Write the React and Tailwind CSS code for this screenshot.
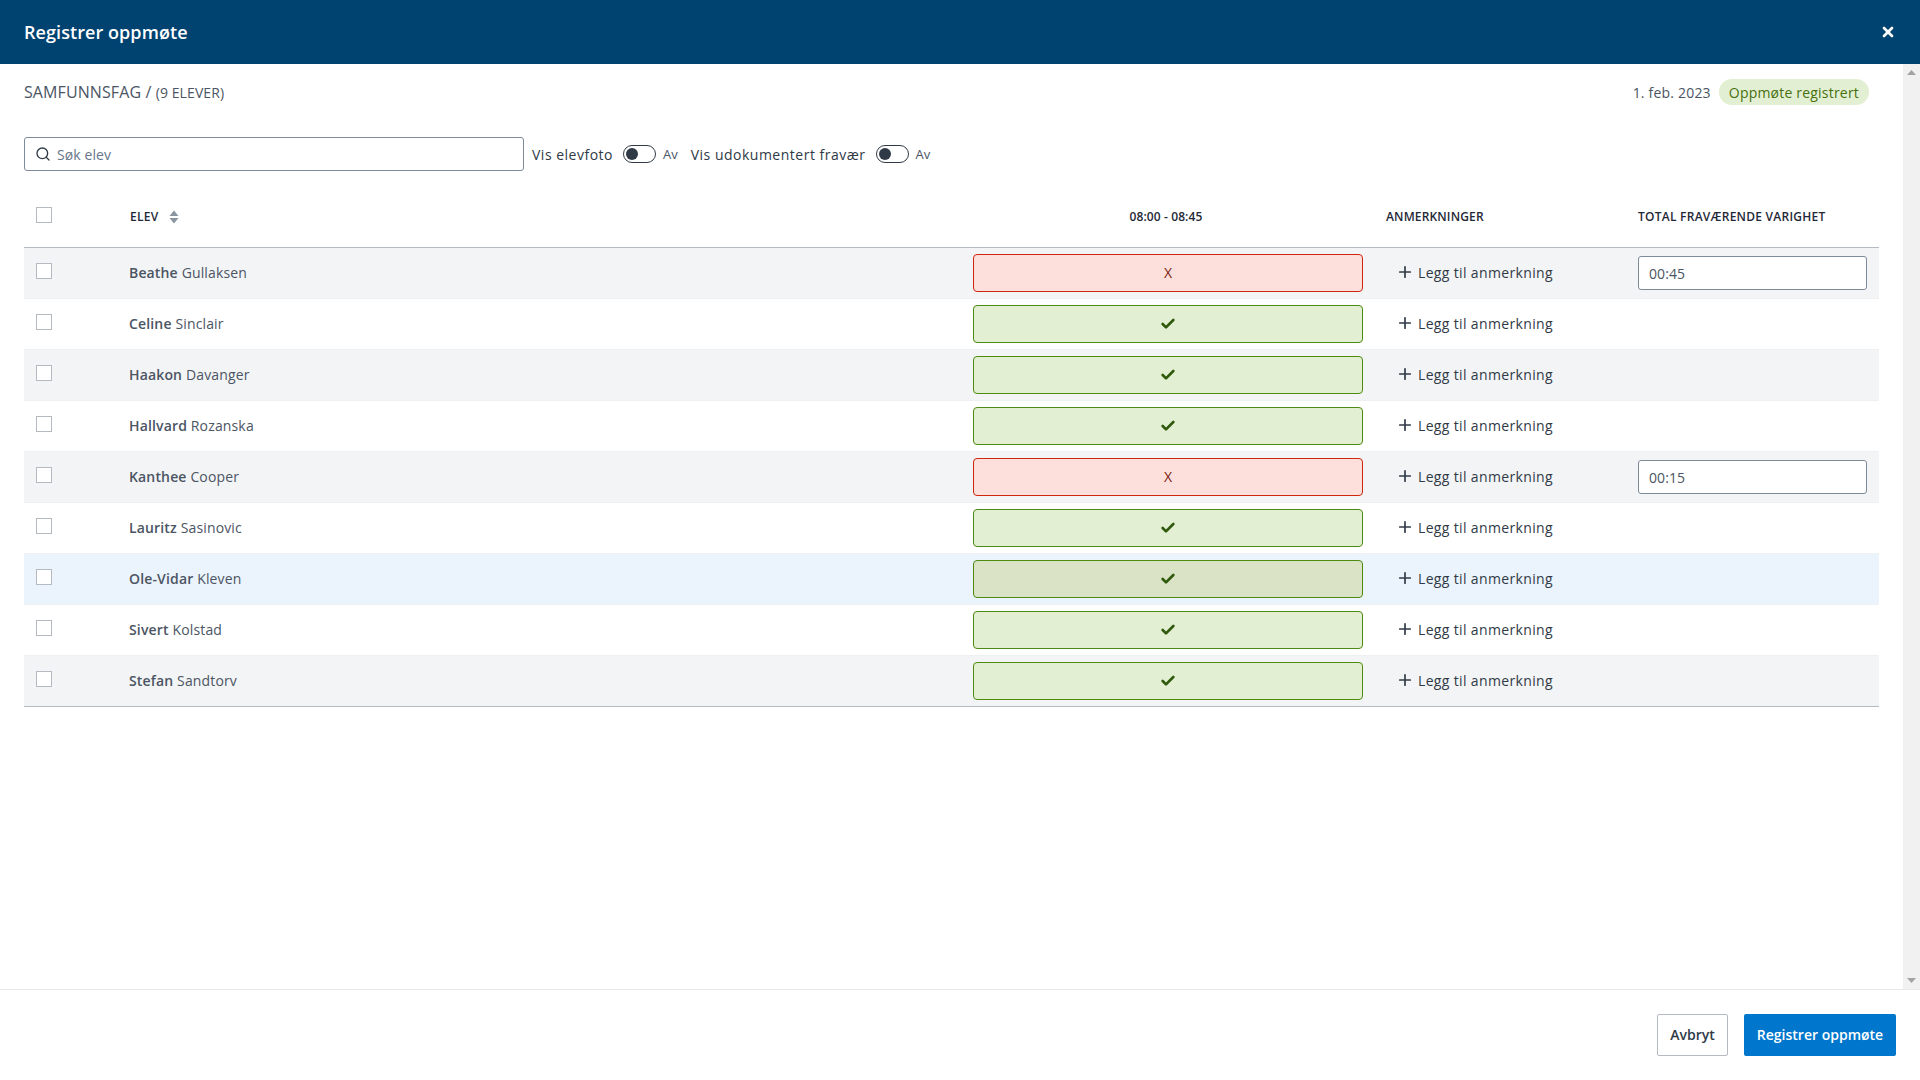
import React from 'react';
import { Search, Plus, Check, X } from 'lucide-react';

const students = [
  { first: 'Beathe', last: 'Gullaksen', absent: '00:45', bg: 'bg-[#f3f4f6]' },
  { first: 'Celine', last: 'Sinclair', bg: 'bg-white' },
  { first: 'Haakon', last: 'Davanger', bg: 'bg-[#f3f4f6]' },
  { first: 'Hallvard', last: 'Rozanska', bg: 'bg-white' },
  { first: 'Kanthee', last: 'Cooper', absent: '00:15', bg: 'bg-[#f3f4f6]' },
  { first: 'Lauritz', last: 'Sasinovic', bg: 'bg-white' },
  { first: 'Ole-Vidar', last: 'Kleven', bg: 'bg-[#ebf3fc]', hover: true },
  { first: 'Sivert', last: 'Kolstad', bg: 'bg-white' },
  { first: 'Stefan', last: 'Sandtorv', bg: 'bg-[#f3f4f6]' },
];

const gridCols = 'grid grid-cols-[105px_844px_413px_252px_241px] items-center';

const Checkbox = ({ className = '' }) => (
  <div className={`ml-[12px] w-[16px] h-[16px] border border-[#b5bac1] bg-white ${className}`} />
);

const Toggle = ({ label }) => (
  <div className="flex items-center">
    <span className="text-[14px] tracking-[0.5px] font-medium text-[#303a46]">{label}</span>
    <div className="ml-[10px] w-[33px] h-[18px] rounded-full border border-[#303a46] bg-white flex items-center pl-[2px]">
      <div className="w-[12px] h-[12px] rounded-full bg-[#303a46]" />
    </div>
    <span className="ml-[7px] mt-[1px] text-[13px] text-[#4b5563]">Av</span>
  </div>
);

const StatusCell = ({ student }) => {
  if (student.absent) {
    return (
      <div className="w-[390px] h-[38px] rounded-[4px] border border-[#d0260f] bg-[#fde0dc] pb-[1px] flex items-center justify-center text-[14px] text-[#7a1c12]">
        X
      </div>
    );
  }
  return (
    <div className={`w-[390px] h-[38px] rounded-[4px] border border-[#4f8a10] flex items-center justify-center ${student.hover ? 'bg-[#dae3c6]' : 'bg-[#e3efd3]'}`}>
      <Check size={16} strokeWidth={4} className="text-[#2f5a0c]" />
    </div>
  );
};

export default function App() {
  return (
    <div className="w-[1920px] h-[1080px] flex flex-col bg-white overflow-hidden font-['Open_Sans',sans-serif] text-[#303a46]">
      <header className="h-[64px] shrink-0 bg-[#004370] flex items-center justify-between pl-[24px] pr-[24px]">
        <h1 className="text-[18px] tracking-[0.07px] font-semibold text-white">Registrer oppmøte</h1>
        <X size={16} strokeWidth={4} className="text-white" />
      </header>

      <div className="flex-1 flex min-h-0">
        <main className="flex-1 pl-[24px] pr-[24px]">
          <div className="h-[56px] flex items-center justify-between">
            <div className="text-[16px] tracking-[0.1px] text-[#4b5563] uppercase">
              Samfunnsfag / <span className="text-[14px]">(9 elever)</span>
            </div>
            <div className="flex items-center pr-[10px]">
              <span className="text-[14px] tracking-[0.2px] text-[#4b5563]">1. feb. 2023</span>
              <span className="ml-[8px] h-[26px] px-[10px] rounded-full bg-[#e3efd3] text-[14px] tracking-[0.2px] text-[#47700f] flex items-center">Oppmøte registrert</span>
            </div>
          </div>

          <div className="mt-[17px] flex items-center">
            <div className="w-[500px] h-[34px] rounded-[3px] border border-[#7d8a99] flex items-center pl-[10px]">
              <Search size={16} strokeWidth={2} className="text-[#303a46]" />
              <span className="ml-[6px] text-[14px] tracking-[0.1px] text-[#68778a]">Søk elev</span>
            </div>
            <div className="ml-[8px] flex items-center gap-[13px]">
              <Toggle label="Vis elevfoto" />
              <Toggle label="Vis udokumentert fravær" />
            </div>
          </div>

          <div className="mt-[14px] w-[1855px]">
            <div className={`${gridCols} h-[63px] border-b border-[#b5bac1] text-[12px] tracking-[0.25px] font-semibold uppercase text-[#1f2937]`}>
              <Checkbox className="mb-[3px]" />
              <div className="flex items-center pl-[1px] pt-[2px]">
                ELEV
                <svg width="10" height="14" viewBox="0 0 10 14" className="ml-[11px]">
                  <path d="M5 0.5 L9.5 6 L0.5 6 Z M0.5 8 L9.5 8 L5 13.5 Z" fill="#8b95a1" />
                </svg>
              </div>
              <div className="w-[386px] pt-[2px] text-center tracking-[0.1px]">08:00 - 08:45</div>
              <div className="pt-[2px] tracking-[0.15px]">Anmerkninger</div>
              <div className="pt-[2px]">Total fraværende varighet</div>
            </div>

            <div className="border-b border-[#b5bac1]">
              {students.map((s) => (
                <div key={s.first} className={`${gridCols} h-[51px] last:h-[50px] border-b border-[#eef0f2] last:border-b-0 ${s.bg}`}>
                  <Checkbox className="mb-[4px]" />
                  <div className="mb-[2px] text-[14px] tracking-[0.15px] text-[#4b5563]">
                    <span className="font-semibold">{s.first}</span> {s.last}
                  </div>
                  <StatusCell student={s} />
                  <div className="mb-[2px] flex items-center pl-[10px] text-[14px] tracking-[0.35px] font-medium text-[#303a46]">
                    <Plus size={18} strokeWidth={2.25} className="mr-[4px]" />
                    Legg til anmerkning
                  </div>
                  <div>
                    {s.absent && (
                      <div className="w-[229px] h-[34px] rounded-[3px] border border-[#7d8a99] bg-white flex items-center pl-[10px] pt-[1px] text-[14px] tracking-[0.1px] text-[#4b5563]">
                        {s.absent}
                      </div>
                    )}
                  </div>
                </div>
              ))}
            </div>
          </div>
        </main>

        <div className="w-[17px] shrink-0 bg-[#f1f1f1] flex flex-col items-center justify-between py-[6px]">
          <svg width="9" height="5" viewBox="0 0 9 5"><path d="M4.5 0 L9 5 L0 5 Z" fill="#a3a3a3" /></svg>
          <svg width="9" height="5" viewBox="0 0 9 5"><path d="M0 0 L9 0 L4.5 5 Z" fill="#a3a3a3" /></svg>
        </div>
      </div>

      <footer className="h-[91px] shrink-0 border-t border-[#e8e8e8] flex items-center justify-end pr-[24px] gap-[16px]">
        <button className="w-[71px] h-[42px] rounded-[2px] border border-[#b5bac1] bg-white pb-[1px] text-[14px] font-semibold text-[#303a46]">Avbryt</button>
        <button className="w-[152px] h-[42px] rounded-[2px] bg-[#0077cc] pb-[1px] text-[14px] font-semibold text-white">Registrer oppmøte</button>
      </footer>
    </div>
  );
}
